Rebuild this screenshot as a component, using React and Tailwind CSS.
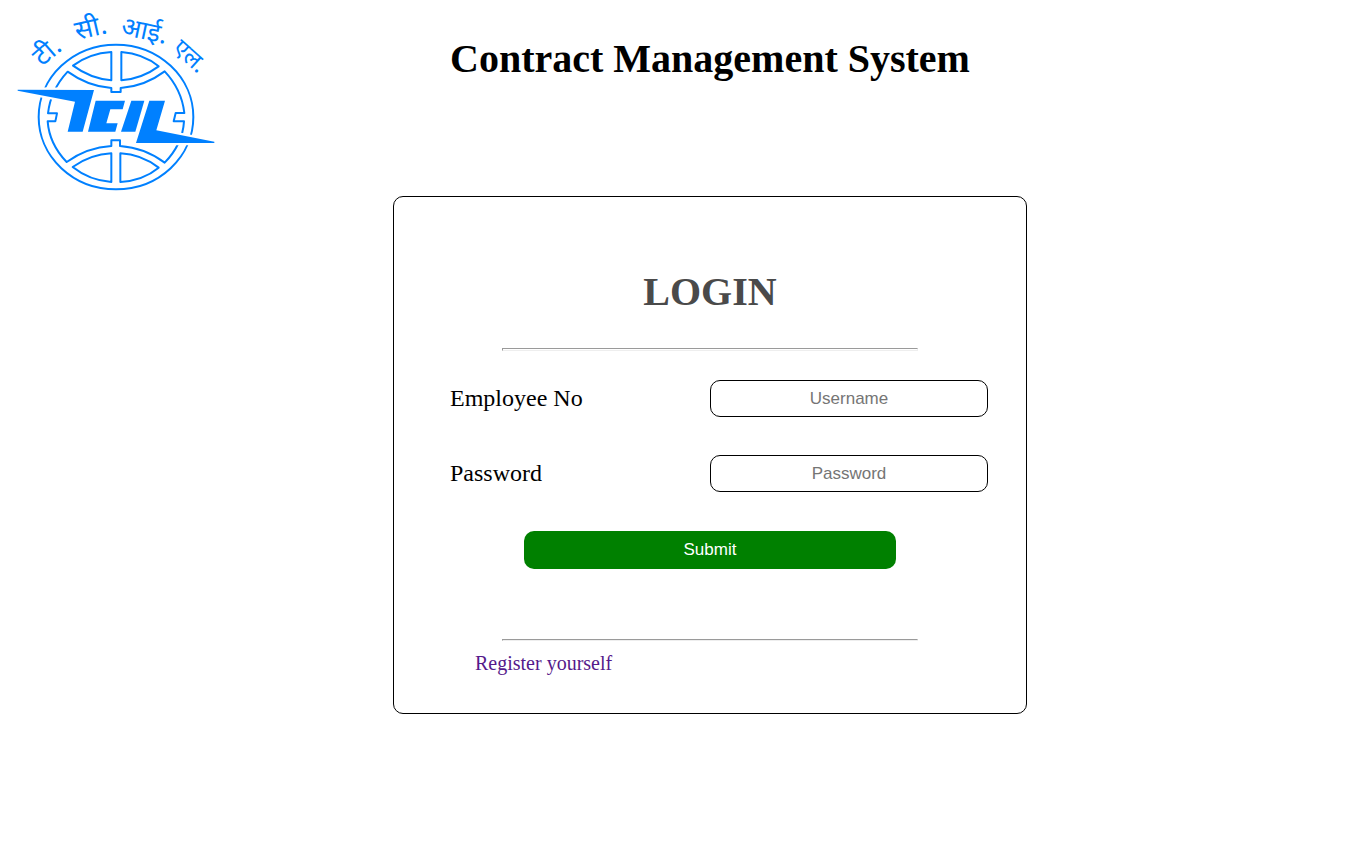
import React from "react";

function Logo() {
  return (
    <svg
      viewBox="0 0 654 600"
      className="h-[200px] w-[218px] shrink-0"
      role="img"
      aria-label="TCIL"
    >
      <g
        fill="#0080ff"
        fontSize="80"
        className="font-['Noto_Sans_Devanagari','Noto_Sans','Lohit_Devanagari',sans-serif]"
      >
        <text transform="translate(127 201) rotate(-41)">टी.</text>
        <text transform="translate(231 120) rotate(-13)">सी.</text>
        <text transform="translate(360 103) rotate(12)" fontSize="78">
          आई.
        </text>
        <text transform="translate(514 150) rotate(42)" fontSize="72">
          एल.
        </text>
      </g>
      <g fill="none" stroke="#0080ff" strokeWidth="6" strokeLinejoin="round">
        <ellipse cx="348" cy="351" rx="232" ry="217" />
        <path d="M334 156V241Q272 236 219 197Q268 160 334 156Z" />
        <path d="M364 156V241Q426 236 476 199Q430 161 364 156Z" />
        <path d="M334 546V460Q272 463 218 501Q268 541 334 546Z" />
        <path d="M361 546V460Q424 463 476 503Q430 541 361 546Z" />
        <path d="M144 340Q152 270 203 215Q265 260 334 264V276H362V264Q434 259 494 214Q545 268 553 339H527L521 364H552Q548 432 494 488Q434 443 360 438V421H334V438Q262 442 200 486Q148 432 143 364H166L171 340Z" />
      </g>
      <g fill="#0080ff" stroke="#ffffff" strokeWidth="14" paintOrder="stroke">
        <path d="M53 269L282 270L248 395H203L225 305L53 272Z" />
        <path d="M448 302H495L469 391L643 425V429H408Z" />
      </g>
      <g fill="#0080ff">
        <path d="M287 302H375L368 328H331L319 370H353L346 395H264Z" />
        <path d="M394 302H433L406 395H363Z" />
      </g>
    </svg>
  );
}

function Field({ id, label, type, placeholder }) {
  return (
    <div className="grid grid-cols-[260px_1fr]">
      <label htmlFor={id} className="text-[24px] leading-[36px]">
        {label}
      </label>
      <input
        id={id}
        name={id}
        type={type}
        placeholder={placeholder}
        className="h-[37px] w-full min-w-0 rounded-[10px] border border-black bg-white text-center font-['Liberation_Sans',Arial,sans-serif] text-[17px] placeholder:text-[#757575]"
      />
    </div>
  );
}

export default function App() {
  return (
    <div className="flex min-h-screen items-start bg-white font-['Liberation_Serif','Times_New_Roman',serif] text-black">
      <Logo />
      <main className="flex flex-1 flex-col items-center pr-[170px] pt-[35px]">
        <h1 className="text-center text-[40px] font-bold leading-[48px]">
          Contract Management System
        </h1>
        <section className="mt-[113px] w-full max-w-[634px] rounded-[10px] border border-black pb-9 pt-[71px]">
          <h2 className="text-center text-[40px] font-bold leading-[48px] text-[#4a4a4a]">
            LOGIN
          </h2>
          <hr className="mx-[108px] mt-8 h-[3px] border border-b-[#eeeeee] border-l-[#9a9a9a] border-r-[#eeeeee] border-t-[#9a9a9a]" />
          <form
            className="mt-[29px] flex flex-col"
            onSubmit={(event) => event.preventDefault()}
          >
            <div className="flex flex-col gap-[38px] pl-14 pr-[38px]">
              <Field
                id="username"
                label="Employee No"
                type="text"
                placeholder="Username"
              />
              <Field
                id="password"
                label="Password"
                type="password"
                placeholder="Password"
              />
            </div>
            <button
              type="submit"
              className="mx-[130px] mt-[39px] h-[38px] rounded-[10px] bg-[#008000] font-['Liberation_Sans',Arial,sans-serif] text-[17px] text-white"
            >
              Submit
            </button>
          </form>
          <hr className="mx-[108px] mt-[70px] h-[2px] border border-b-[#eeeeee] border-l-[#9a9a9a] border-r-[#eeeeee] border-t-[#9a9a9a]" />
          <p className="mt-2 pl-[81px] text-[20px] leading-[28px]">
            <a href="#register" className="text-[#551a8b]">
              Register yourself
            </a>
          </p>
        </section>
      </main>
    </div>
  );
}
